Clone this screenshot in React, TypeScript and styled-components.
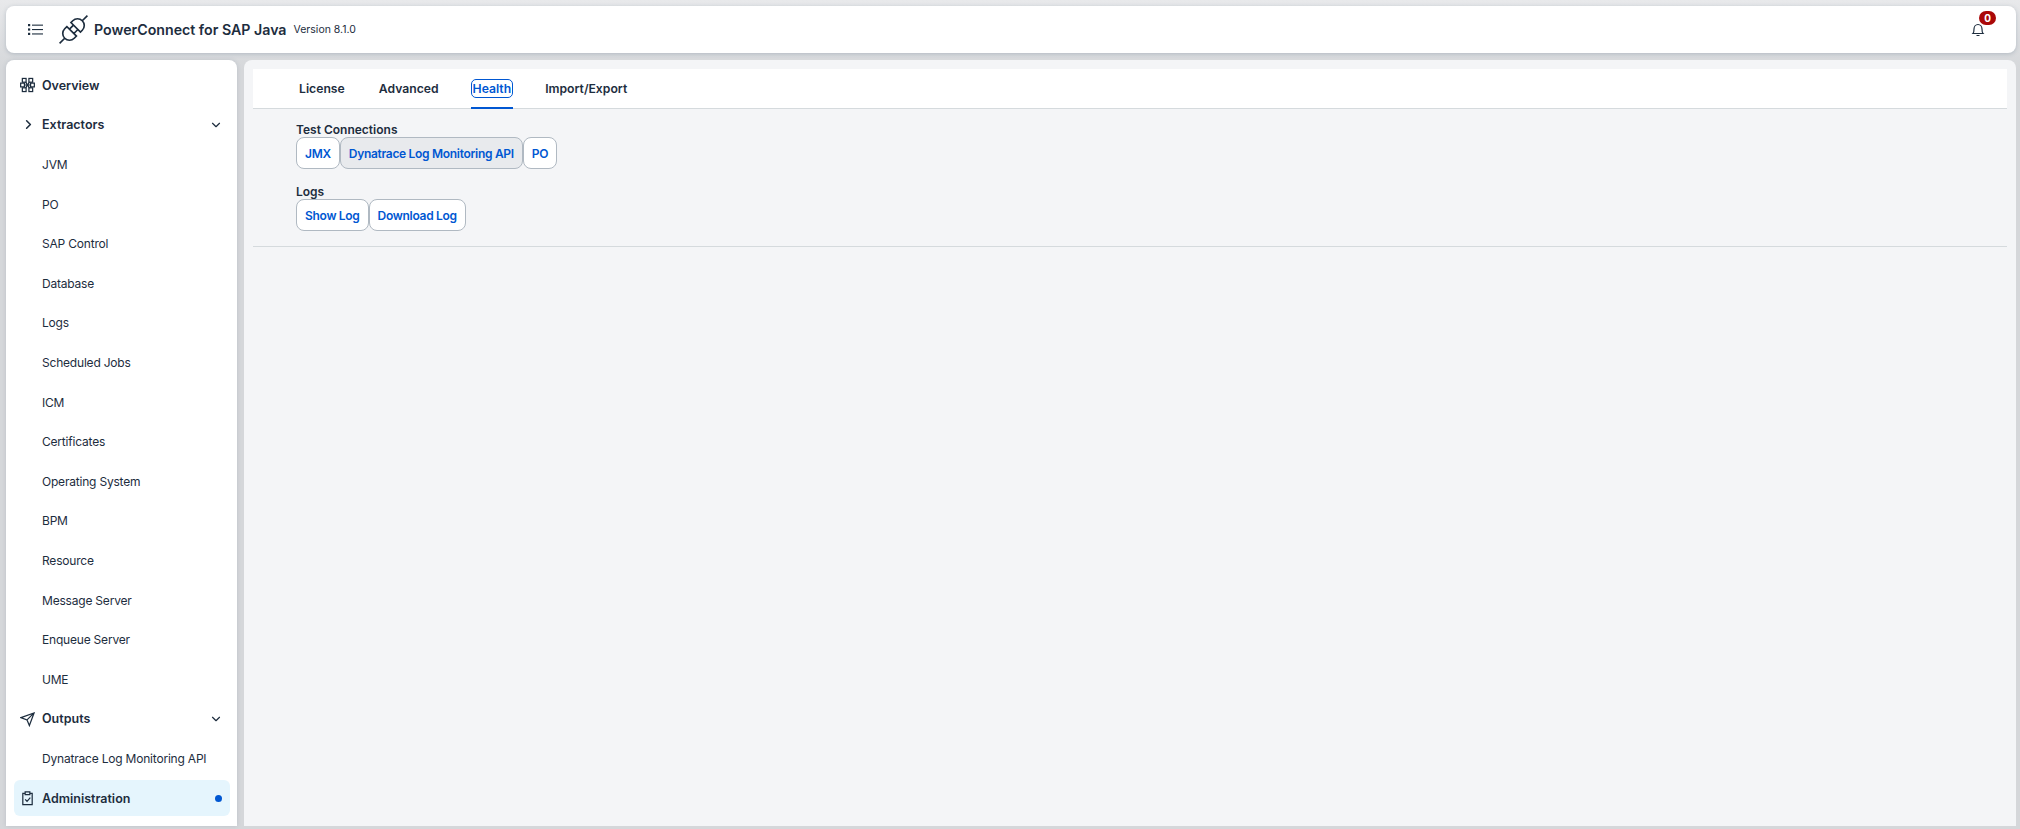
import React from 'react';
import styled, { createGlobalStyle } from 'styled-components';
import { ChevronDown, ChevronRight } from 'lucide-react';

const FONT = 'Inter, "Liberation Sans", sans-serif';

const GlobalStyle = createGlobalStyle`
  html, body {
    margin: 0;
    padding: 0;
    height: 100%;
    background: #e3e5e8;
    font-family: ${FONT};
    color: #1d2d3e;
    overflow: hidden;
  }
`;

const Page = styled.div`
  width: 2020px;
  height: 829px;
  box-sizing: border-box;
  padding: 6px 4px 3px 6px;
  display: flex;
  flex-direction: column;
  gap: 7px;
  background: linear-gradient(#e8e9eb, #d5d7da 70px);
`;

const Header = styled.header`
  height: 47px;
  flex: none;
  box-sizing: border-box;
  background: #fff;
  border-radius: 8px;
  box-shadow: 0 1px 4px rgba(85, 107, 130, 0.3);
  display: flex;
  align-items: center;
  padding: 0 14px 0 22px;
`;

const MenuButton = styled.svg`
  width: 15px;
  height: 13px;
  margin-right: 16px;
`;

const Logo = styled.svg`
  width: 29px;
  height: 29px;
  margin-right: 6px;
`;

const Title = styled.span`
  font-size: 14.2px;
  font-weight: 600;
  margin-right: 7px;
`;

const Version = styled.span`
  font-size: 10.5px;
`;

const BellWrap = styled.span`
  margin-left: auto;
  position: relative;
  display: flex;
  margin-right: 17px;
`;

const Badge = styled.span`
  position: absolute;
  top: -12px;
  left: 8px;
  width: 17px;
  height: 14px;
  border-radius: 7px;
  background: #aa0808;
  color: #fff;
  font-size: 10px;
  font-weight: 700;
  text-align: center;
  line-height: 14px;
`;

const Body = styled.div`
  flex: 1;
  min-height: 0;
  display: flex;
  gap: 7px;
`;

const Sidebar = styled.nav`
  width: 231px;
  flex: none;
  box-sizing: border-box;
  background: #fff;
  border-radius: 8px 8px 0 0;
  box-shadow: 0 0 4px rgba(85, 107, 130, 0.2);
  padding: 5.5px 7px;
  display: flex;
  flex-direction: column;
`;

const NavRow = styled.div<{ $selected?: boolean; $group?: boolean }>`
  height: ${(p) => (p.$selected ? '36px' : '39.6px')};
  margin: ${(p) => (p.$selected ? '2px 0 0 1px' : '0')};
  flex: none;
  display: flex;
  align-items: center;
  box-sizing: border-box;
  padding: 0 7px 0 ${(p) => (p.$selected ? '6px' : '7px')};
  border-radius: 6px;
  font-size: ${(p) => (p.$group || p.$selected ? '12.5px' : '12px')};
  letter-spacing: ${(p) => (p.$group || p.$selected ? '0' : '-0.2px')};
  font-weight: ${(p) => (p.$group || p.$selected ? 600 : 400)};
  background: ${(p) => (p.$selected ? '#e5f5fd' : 'transparent')};
`;

const NavIcon = styled.span`
  width: 22px;
  flex: none;
  display: flex;
  justify-content: flex-start;
`;

const NavEnd = styled.span`
  margin-left: auto;
  display: flex;
  align-items: center;
`;

const Dot = styled.span`
  width: 7px;
  height: 7px;
  border-radius: 50%;
  background: #0057d2;
  margin-right: 1px;
`;

const Main = styled.main`
  flex: 1;
  min-width: 0;
  background: #f4f5f7;
  border-radius: 8px 8px 0 0;
  padding: 9px;
`;

const TabBar = styled.div`
  height: 40px;
  box-sizing: border-box;
  background: #fff;
  border-bottom: 1px solid #d5dadd;
  display: flex;
  align-items: stretch;
  padding-left: 44px;
  gap: 30px;
`;

const Tab = styled.div<{ $active?: boolean }>`
  position: relative;
  display: flex;
  align-items: center;
  padding: 0 ${(p) => (p.$active ? '0' : '2px')};
  font-size: 12.2px;
  font-weight: 600;
  color: ${(p) => (p.$active ? '#0057d2' : '#1d2d3e')};
  ${(p) => p.$active && `
    &::after {
      content: '';
      position: absolute;
      left: 0;
      right: 0;
      bottom: -1px;
      height: 2px;
      background: #0057d2;
    }
  `}
`;

const TabFocus = styled.span`
  border: 1px solid #0057d2;
  border-radius: 5px;
  padding: 0 1px;
  line-height: 17px;
`;

const Section = styled.section`
  padding: 14px 0 0 43px;
  &:last-of-type {
    padding-top: 16px;
    padding-bottom: 15px;
    border-bottom: 1px solid #d5dadd;
  }
`;

const SectionTitle = styled.div`
  font-size: 12px;
  font-weight: 600;
  line-height: 14px;
`;

const Buttons = styled.div`
  display: flex;
`;

const Action = styled.button<{ $on?: boolean }>`
  height: 32px;
  box-sizing: border-box;
  padding: 0 8px;
  border: 1px solid #b0b9c2;
  border-radius: 8px;
  background: ${(p) => (p.$on ? '#e8eaed' : '#fff')};
  color: #0057d2;
  font: 600 12px ${FONT};
  letter-spacing: -0.3px;
`;

const Glyph = styled.svg`
  width: 15px;
  height: 16px;
  fill: none;
  stroke: #1d2d3e;
  stroke-width: 1.3;
`;

const Bell = styled.svg`
  width: 14px;
  height: 14px;
  fill: none;
  stroke: #1d2d3e;
  stroke-width: 1.2;
`;

const extractors = ['JVM', 'PO', 'SAP Control', 'Database', 'Logs', 'Scheduled Jobs', 'ICM', 'Certificates', 'Operating System', 'BPM', 'Resource', 'Message Server', 'Enqueue Server', 'UME'];

export default function App() {
  return (
    <>
      <GlobalStyle />
      <Page>
        <Header>
          <MenuButton viewBox="0 0 15 13" fill="#1d2d3e">
            <rect x="0" y="1" width="2.2" height="2.2" />
            <rect x="0" y="5.4" width="2.2" height="2.2" />
            <rect x="0" y="9.8" width="2.2" height="2.2" />
            <rect x="4" y="1.6" width="11" height="1.1" />
            <rect x="4" y="6" width="11" height="1.1" />
            <rect x="4" y="10.4" width="11" height="1.1" />
          </MenuButton>
          <Logo viewBox="-14 -14 28 28" fill="none" stroke="#1d2d3e" strokeWidth="1.6">
            <g transform="rotate(-45)">
              <path d="M-2.500 -6.500h-3a6.500 6.500 0 0 0 0 13h3zM-2.500 -3h5.500M-2.500 3h5.500" />
              <path d="M3 -6.500h2.500a6.500 6.500 0 0 1 0 13H3zM-12 0h-7M12 0h7" />
            </g>
          </Logo>
          <Title>PowerConnect for SAP Java</Title>
          <Version>Version 8.1.0</Version>
          <BellWrap>
            <Bell viewBox="0 0 14 14">
              <path d="M2 10.500c1-1 1-2.500 1-4.500 0-2.500 1.700-4.500 4-4.500s4 2 4 4.500c0 2 0 3.500 1 4.500zM5.500 12.500h3" />
            </Bell>
            <Badge>0</Badge>
          </BellWrap>
        </Header>
        <Body>
          <Sidebar>
            <NavRow $group>
              <NavIcon>
                <Glyph viewBox="0 0 16 16">
                  <rect x="2.500" y="1" width="4" height="4" />
                  <rect x="9.500" y="1" width="4" height="4" />
                  <rect x="0.700" y="6" width="4" height="4" />
                  <rect x="11.300" y="6" width="4" height="4" />
                  <rect x="2.500" y="11" width="4" height="4" />
                  <rect x="9.500" y="11" width="4" height="4" />
                  <path d="M5 8h6M6 5l4 6M10 5l-4 6" />
                </Glyph>
              </NavIcon>
              Overview
            </NavRow>
            <NavRow $group>
              <NavIcon><ChevronRight size={15} strokeWidth={2.5} style={{ marginLeft: 1 }} /></NavIcon>Extractors
              <NavEnd><ChevronDown size={14} /></NavEnd>
            </NavRow>
            {extractors.map((e) => (
              <NavRow key={e}><NavIcon />{e}</NavRow>
            ))}
            <NavRow $group>
              <NavIcon>
                <Glyph viewBox="0 0 16 16">
                  <path d="M1 6.500L15 1.500 10 15 7.500 9zM7.500 9L15 1.500" />
                </Glyph>
              </NavIcon>
              Outputs
              <NavEnd><ChevronDown size={14} /></NavEnd>
            </NavRow>
            <NavRow><NavIcon />Dynatrace Log Monitoring API</NavRow>
            <NavRow $selected>
              <NavIcon>
                <Glyph viewBox="0 0 16 16">
                  <path d="M5 3H3v12h10V3h-2M5.500 1.500h5v3h-5zM5.500 9.500l2 2 3.500-4" />
                </Glyph>
              </NavIcon>
              Administration
              <NavEnd><Dot /></NavEnd>
            </NavRow>
          </Sidebar>
          <Main>
            <TabBar>
              <Tab>License</Tab>
              <Tab>Advanced</Tab>
              <Tab $active><TabFocus>Health</TabFocus></Tab>
              <Tab>Import/Export</Tab>
            </TabBar>
            <Section>
              <SectionTitle>Test Connections</SectionTitle>
              <Buttons>
                <Action>JMX</Action>
                <Action $on>Dynatrace Log Monitoring API</Action>
                <Action>PO</Action>
              </Buttons>
            </Section>
            <Section>
              <SectionTitle>Logs</SectionTitle>
              <Buttons>
                <Action>Show Log</Action>
                <Action>Download Log</Action>
              </Buttons>
            </Section>
          </Main>
        </Body>
      </Page>
    </>
  );
}
